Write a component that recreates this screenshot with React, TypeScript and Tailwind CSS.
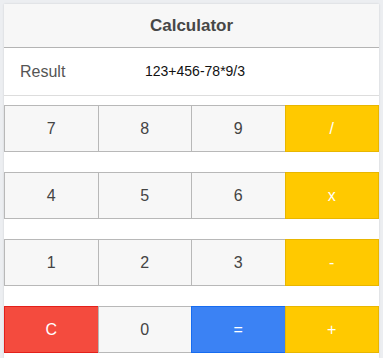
const rows: { label: string; kind: 'num' | 'op' | 'clear' | 'eq' }[][] = [
  [
    { label: '7', kind: 'num' },
    { label: '8', kind: 'num' },
    { label: '9', kind: 'num' },
    { label: '/', kind: 'op' },
  ],
  [
    { label: '4', kind: 'num' },
    { label: '5', kind: 'num' },
    { label: '6', kind: 'num' },
    { label: 'x', kind: 'op' },
  ],
  [
    { label: '1', kind: 'num' },
    { label: '2', kind: 'num' },
    { label: '3', kind: 'num' },
    { label: '-', kind: 'op' },
  ],
  [
    { label: 'C', kind: 'clear' },
    { label: '0', kind: 'num' },
    { label: '=', kind: 'eq' },
    { label: '+', kind: 'op' },
  ],
];

const styles = {
  num: 'bg-[#f7f7f7] border-[#b8b8b8] text-[#444]',
  op: 'bg-[#ffc900] border-[#e8b600] text-white',
  clear: 'bg-[#f44b3e] border-[#e3201b] text-white',
  eq: 'bg-[#3b82f4] border-[#176cf0] text-white',
};

export default function App() {
  return (
    <div className="min-h-screen bg-[#eceef1] pl-1 pr-1 pt-1 font-['Liberation_Sans',Arial,sans-serif]">
      <div className="bg-white min-h-[354px] shadow-[0_0_2px_rgba(0,0,0,0.12)]">
        <div className="h-[44px] bg-[#f7f7f7] border-b border-[#b4b4b4] flex items-center justify-center">
          <h1 className="text-[17px] font-bold text-[#474747]">Calculator</h1>
        </div>
        <div className="h-[48px] border-b border-[#dddddd] flex items-center">
          <span className="w-[141px] pl-4 text-[16px] text-[#555]">Result</span>
          <span className="text-[14px] text-[#111]">123+456-78*9/3</span>
        </div>
        <div className="pt-[9px] flex flex-col gap-[20px]">
          {rows.map((row, i) => (
            <div key={i} className="flex">
              {row.map((b, j) => (
                <button
                  key={b.label}
                  className={`flex-1 h-[47px] border text-[16px] flex items-center justify-center ${j > 0 ? '-ml-px' : ''} ${styles[b.kind]}`}
                >
                  {b.label}
                </button>
              ))}
            </div>
          ))}
        </div>
      </div>
    </div>
  );
}
